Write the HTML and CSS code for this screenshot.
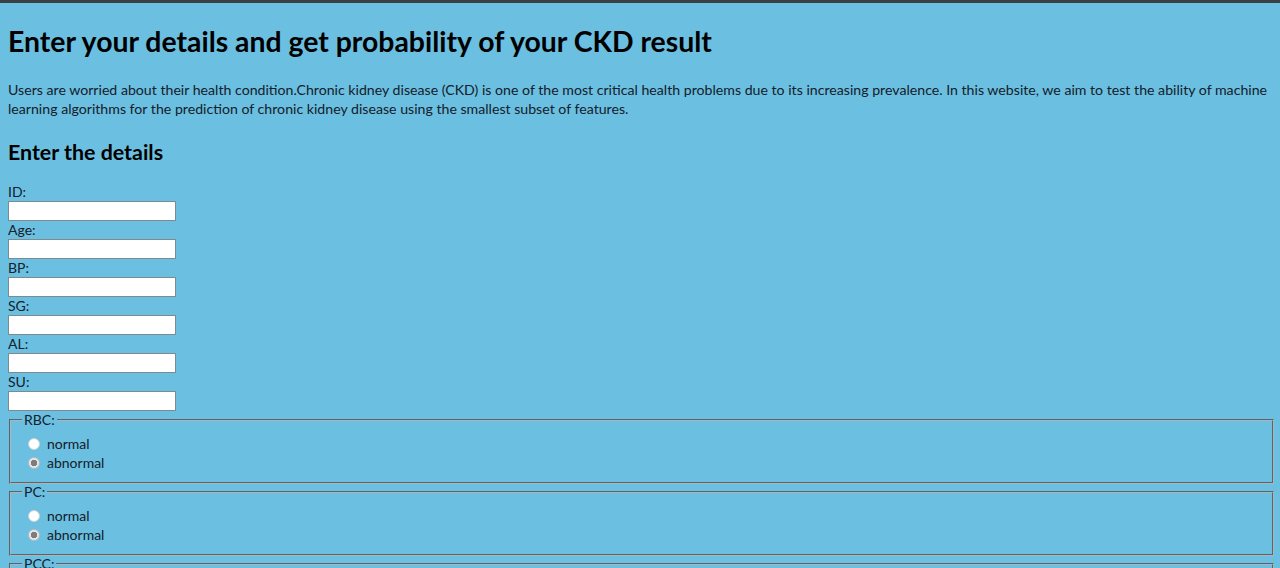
FILE: index.html
```html
<!DOCTYPE html>
<html lang="en">
<head>
<meta charset="utf-8">
<title>CKD Prediction</title>
<link rel="stylesheet" href="styles.css">
</head>
<body>
<div class="topbar"></div>
<main class="page">
  <h1 class="title">Enter your details and get probability of your CKD result</h1>
  <p class="intro">Users are worried about their health condition.Chronic kidney disease (CKD) is one of the most critical health problems due to its increasing prevalence. In this website, we aim to test the ability of machine learning algorithms for the prediction of chronic kidney disease using the smallest subset of features.</p>
  <h2 class="subtitle">Enter the details</h2>
  <form class="form">
    <div class="field"><label for="id">ID:</label><input id="id" type="text"></div>
    <div class="field"><label for="age">Age:</label><input id="age" type="text"></div>
    <div class="field"><label for="bp">BP:</label><input id="bp" type="text"></div>
    <div class="field"><label for="sg">SG:</label><input id="sg" type="text"></div>
    <div class="field"><label for="al">AL:</label><input id="al" type="text"></div>
    <div class="field"><label for="su">SU:</label><input id="su" type="text"></div>
    <fieldset class="group">
      <legend>RBC:</legend>
      <label class="opt"><input type="radio" name="rbc"> normal</label>
      <label class="opt"><input type="radio" name="rbc" checked> abnormal</label>
    </fieldset>
    <fieldset class="group">
      <legend>PC:</legend>
      <label class="opt"><input type="radio" name="pc"> normal</label>
      <label class="opt"><input type="radio" name="pc" checked> abnormal</label>
    </fieldset>
    <fieldset class="group">
      <legend>PCC:</legend>
      <label class="opt"><input type="radio" name="pcc"> present</label>
      <label class="opt"><input type="radio" name="pcc" checked> notpresent</label>
    </fieldset>
  </form>
</main>
</body>
</html>
```
FILE: styles.css
```css
html, body {
  margin: 0;
  padding: 0;
  background: #6bbfe0;
}
body {
  font-family: Lato, "Open Sans", sans-serif;
  color: #14202b;
}
.topbar {
  height: 3px;
  background: #3b4045;
}
.page {
  padding: 0 6px 0 8px;
}
.title {
  margin: 0;
  padding-top: 21px;
  font-size: 28.4px;
  line-height: 34px;
  font-weight: 700;
  color: #000;
}
.intro {
  margin: 0;
  padding-top: 22px;
  font-size: 14.15px;
  line-height: 19px;
}
.subtitle {
  margin: 0;
  padding-top: 21px;
  font-size: 21.4px;
  line-height: 26px;
  font-weight: 700;
  color: #000;
}
.form {
  padding-top: 18px;
}
.field label {
  display: block;
  font-size: 14px;
  line-height: 18px;
}
.field input {
  display: block;
  box-sizing: border-box;
  width: 168px;
  height: 20px;
  margin: 0;
  border: 1px solid #7c8a92;
  background: #fff;
}
.group {
  margin: 0 0 -1px 1px;
  padding: 5px 10px 10px 17px;
  border: 2px groove #a9b6bc;
  font-size: 14px;
}
.group legend {
  padding: 0 2px;
  margin-left: -6px;
  line-height: 18px;
}
.opt {
  display: flex;
  align-items: center;
  height: 19px;
  gap: 7px;
}
.opt input {
  appearance: none;
  -webkit-appearance: none;
  width: 12px;
  height: 12px;
  margin: 0;
  border-radius: 50%;
  border: 1px solid #c9cfd2;
  background: #fff;
}
.opt input:checked {
  background: radial-gradient(circle, #7d7d7d 0 3px, #e6e6e6 3.5px);
  border-color: #b8bec2;
}
```
